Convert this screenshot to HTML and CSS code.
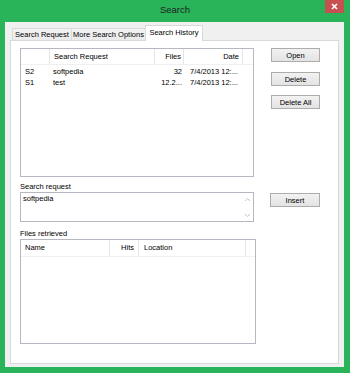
FILE: index.html
```html
<!DOCTYPE html>
<html lang="en">
<head>
    <meta charset="UTF-8">
    <title>Search</title>
    <link rel="stylesheet" href="styles.css">
</head>
<body>
    <div class="window">
        <div class="titlebar">
            <span></span>
            <span class="title">Search</span>
            <span class="close">
                <svg width="7" height="7" viewBox="0 0 7 7"><path d="M1 1L6 6M6 1L1 6" stroke="#fff" stroke-width="1.6"/></svg>
            </span>
        </div>

        <div class="client">
            <div class="tabs">
                <div class="tab tab-request">Search Request</div>
                <div class="tab tab-options">More Search Options</div>
                <div class="tab tab-history active">Search History</div>
            </div>

            <div class="panel">
                <!-- history list and its buttons -->
                <div class="top-row">
                    <div class="list history">
                        <div class="lhead">
                            <div class="cell"></div>
                            <div class="cell">Search Request</div>
                            <div class="cell right">Files</div>
                            <div class="cell right">Date</div>
                            <div class="cell last"></div>
                        </div>
                        <div class="lrow">
                            <div class="cell">S2</div>
                            <div class="cell">softpedia</div>
                            <div class="cell right">32</div>
                            <div class="cell date">7/4/2013 12:...</div>
                        </div>
                        <div class="lrow">
                            <div class="cell">S1</div>
                            <div class="cell">test</div>
                            <div class="cell right">12.2...</div>
                            <div class="cell date">7/4/2013 12:...</div>
                        </div>
                    </div>
                    <div class="buttons">
                        <button class="btn">Open</button>
                        <button class="btn btn-delete">Delete</button>
                        <button class="btn btn-delete-all">Delete All</button>
                    </div>
                </div>

                <div class="label">Search request</div>
                <div class="req-row">
                    <div class="textbox">
                        <span class="text">softpedia</span>
                        <div class="scroll">
                            <svg width="7" height="5" viewBox="0 0 7 5"><path d="M1 4L3.5 1.5L6 4" fill="none" stroke="#c2c2c2" stroke-width="1"/></svg>
                            <svg width="7" height="5" viewBox="0 0 7 5"><path d="M1 1L3.5 3.5L6 1" fill="none" stroke="#c2c2c2" stroke-width="1"/></svg>
                        </div>
                    </div>
                    <button class="btn btn-insert">Insert</button>
                </div>

                <div class="label label-files">Files retrieved</div>
                <div class="list files">
                    <div class="lhead">
                        <div class="cell">Name</div>
                        <div class="cell right">Hits</div>
                        <div class="cell loc">Location</div>
                        <div class="cell last"></div>
                    </div>
                </div>
            </div>
        </div>
    </div>
</body>
</html>
```

FILE: styles.css
```css
body {
    margin: 0;
    padding: 0;
    font-family: "Liberation Sans", Arial, sans-serif;
    font-size: 7.5px;
    color: #000;
}

.window {
    width: 350px;
    height: 373px;
    background-color: #2ab459;
    display: flex;
    flex-direction: column;
}

/* title bar */
.titlebar {
    height: 22px;
    display: grid;
    grid-template-columns: 1fr auto 1fr;
}

.title {
    font-size: 9.5px;
    color: #1e1e1e;
    line-height: 20px;
}

.close {
    justify-self: end;
    align-self: start;
    width: 19px;
    height: 13px;
    margin-right: 6px;
    background-color: #c75050;
    display: flex;
    align-items: center;
    justify-content: center;
}

.close svg {
    display: block;
}

/* client area */
.client {
    flex: 1;
    margin: 0 6px 6px 5px;
    background-color: #f0f0f0;
    padding: 3px 5px 3px 5px;
    display: flex;
    flex-direction: column;
}

.tabs {
    height: 15px;
    display: flex;
    align-items: flex-end;
    padding-left: 2px;
}

.tab {
    height: 11px;
    line-height: 12px;
    border: 1px solid #d9d9d9;
    border-bottom: none;
    background: linear-gradient(#f3f3f3, #ebebeb);
    text-align: center;
    white-space: nowrap;
    overflow: hidden;
}

.tab-request {
    width: 58px;
}

.tab-options {
    width: 73px;
    margin-left: -1px;
}

.tab-history {
    width: 56px;
}

.tab.active {
    height: 15px;
    line-height: 14px;
    background: #fff;
    margin-left: -1px;
    margin-bottom: -1px;
    position: relative;
    z-index: 1;
}

.panel {
    flex: 1;
    background-color: #fff;
    border: 1px solid #d9d9d9;
    padding: 7px 0 0 9px;
}

/* list views */
.list {
    border: 1px solid #b5b8c0;
    background: #fff;
    box-sizing: border-box;
}

.lhead,
.lrow {
    display: grid;
}

.lhead {
    height: 15px;
    border-bottom: 1px solid #f0f0f0;
    margin-bottom: 1px;
}

.lhead .cell {
    line-height: 15px;
    border-right: 1px solid #e5e5e5;
}

.lhead .cell.last {
    border-right: none;
}

.lrow {
    height: 11px;
    line-height: 11px;
}

.cell {
    padding-left: 4px;
    padding-right: 2px;
    white-space: nowrap;
    overflow: hidden;
}

.right {
    text-align: right;
}

.history {
    width: 234px;
    height: 129px;
}

.history .lhead,
.history .lrow {
    grid-template-columns: 29px 105px 29px 59px 1fr;
}

.history .lrow .cell:nth-child(2) {
    padding-left: 3px;
}

.history .lhead .cell:nth-child(4) {
    padding-right: 3px;
}

.history .date {
    padding-left: 6px;
}

.files {
    width: 236px;
    height: 105px;
}

.files .lhead {
    height: 16px;
    grid-template-columns: 89px 29px 107px 1fr;
}

.files .lhead .cell {
    line-height: 16px;
}

.files .lhead .right {
    padding-right: 4px;
}

.files .loc {
    padding-left: 5px;
}

/* buttons */
.top-row {
    display: flex;
}

.buttons {
    margin-left: 17px;
    display: flex;
    flex-direction: column;
}

.btn {
    width: 49px;
    height: 14px;
    padding: 0;
    font-family: "Liberation Sans", Arial, sans-serif;
    font-size: 7.5px;
    color: #000;
    background: linear-gradient(#f2f2f2, #e3e3e3);
    border: 1px solid #acacac;
    border-radius: 0;
}

.btn-delete {
    margin-top: 10px;
}

.btn-delete-all {
    margin-top: 9px;
}

/* search request box */
.label {
    margin-top: 4px;
    height: 11px;
    line-height: 11px;
}

.label-files {
    margin-top: 6px;
}

.req-row {
    display: flex;
    align-items: flex-start;
}

.textbox {
    width: 234px;
    height: 30px;
    box-sizing: border-box;
    border: 1px solid #b5b8c0;
    display: flex;
    justify-content: space-between;
}

.textbox .text {
    padding: 0 2px;
    line-height: 11px;
}

.scroll {
    width: 10px;
    margin-right: 1px;
    display: flex;
    flex-direction: column;
    justify-content: space-between;
    align-items: center;
    padding: 4px 0 3px;
}

.scroll svg {
    display: block;
}

.btn-insert {
    width: 50px;
    margin-left: 16px;
    margin-top: 1px;
}
```
